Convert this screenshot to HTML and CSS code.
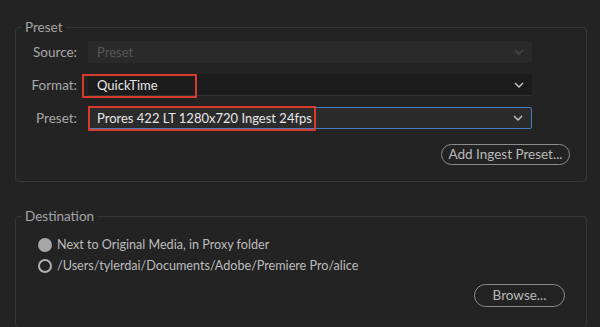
FILE: index.html
```html
<!DOCTYPE html>
<html lang="en">
<head>
    <meta charset="UTF-8">
    <title>Ingest Settings</title>
    <link rel="stylesheet" href="styles.css">
</head>
<body>
    <!-- Preset -->
    <fieldset class="group">
        <legend>Preset</legend>
        <div class="form">
            <label class="field-label">Source:</label>
            <div class="select is-disabled">
                <span class="select-value">Preset</span>
                <svg class="chevron" width="10" height="6" viewBox="0 0 10 6"><path d="M1 1l4 4 4-4" fill="none" stroke="currentColor" stroke-width="1.4"/></svg>
            </div>

            <label class="field-label">Format:</label>
            <div class="select is-dark">
                <span class="select-value">QuickTime</span>
                <svg class="chevron" width="10" height="6" viewBox="0 0 10 6"><path d="M1 1l4 4 4-4" fill="none" stroke="currentColor" stroke-width="1.4"/></svg>
                <div class="highlight highlight-format"></div>
            </div>

            <label class="field-label">Preset:</label>
            <div class="select is-focused">
                <span class="select-value">Prores 422 LT 1280x720 Ingest 24fps</span>
                <svg class="chevron" width="10" height="6" viewBox="0 0 10 6"><path d="M1 1l4 4 4-4" fill="none" stroke="currentColor" stroke-width="1.4"/></svg>
                <div class="highlight highlight-preset"></div>
            </div>
        </div>
        <div class="actions">
            <button class="pill-btn">Add Ingest Preset...</button>
        </div>
    </fieldset>

    <!-- Destination -->
    <fieldset class="group group-dest">
        <legend>Destination</legend>
        <div class="radio-list">
            <div class="radio-row">
                <span class="radio is-checked"></span>
                <span>Next to Original Media, in Proxy folder</span>
            </div>
            <div class="radio-row">
                <span class="radio"></span>
                <span>/Users/tylerdai/Documents/Adobe/Premiere Pro/alice</span>
            </div>
        </div>
        <div class="actions actions-dest">
            <button class="pill-btn browse-btn">Browse...</button>
        </div>
    </fieldset>
</body>
</html>
```

FILE: styles.css
```css
* {
    margin: 0;
    padding: 0;
    box-sizing: border-box;
}

body {
    font-family: 'Lato', 'Open Sans', sans-serif;
    font-size: 13px;
    background-color: #232323;
    color: #b4b4b4;
    width: 600px;
    height: 327px;
    padding: 19px 13px 0 15px;
    overflow: hidden;
    display: flex;
    flex-direction: column;
    gap: 26px;
}

/* 그룹 박스 */
.group {
    border: 1px solid #363636;
    border-radius: 4px;
    padding: 0;
}

.group legend {
    margin-left: 6px;
    padding: 0 3px;
    line-height: 16px;
    color: #a3a3a3;
    font-size: 13.5px;
}

/* 폼 영역 */
.form {
    display: grid;
    grid-template-columns: 61px 444px;
    column-gap: 11px;
    row-gap: 11px;
    padding-top: 6px;
    align-items: center;
}

.field-label {
    text-align: right;
    color: #a9a9a9;
    font-size: 13.5px;
}

.select {
    position: relative;
    height: 22px;
    display: flex;
    align-items: center;
    justify-content: space-between;
    padding: 0 8px 0 9px;
    background-color: #2b2b2b;
    color: #e6e6e6;
    border-radius: 2px;
}

.select .chevron {
    color: #c9c9c9;
}

.select.is-disabled {
    background-color: #2a2a2a;
    color: #575757;
}

.select.is-disabled .chevron {
    color: #4a4a4a;
}

.select.is-dark {
    background-color: #1c1c1c;
    border-bottom: 1px solid #333;
}

.select.is-focused {
    border: 1px solid #4b7cc2;
    padding-left: 8px;
}

/* 빨간 강조 박스 */
.highlight {
    position: absolute;
    border: 2px solid #d63c2c;
    pointer-events: none;
}

.highlight-format {
    left: -6px;
    top: 0;
    width: 115px;
    height: 24px;
}

.highlight-preset {
    left: -1px;
    top: -2px;
    width: 228px;
    height: 25px;
}

/* 버튼 */
.actions {
    display: flex;
    justify-content: flex-end;
    padding: 15px 16px 16px 0;
}

.pill-btn {
    font-family: inherit;
    font-size: 13.5px;
    color: #b9b9b9;
    background: transparent;
    border: 1.5px solid #8c8c8c;
    border-radius: 11px;
    height: 21px;
    width: 129px;
    line-height: 1;
}

.browse-btn {
    width: 91px;
    height: 23px;
    border-radius: 12px;
}

/* 목적지 */
.group-dest {
    flex: 1;
    border-bottom: none;
}

.radio-list {
    display: flex;
    flex-direction: column;
    padding: 10px 0 0 22px;
}

.radio-row {
    display: flex;
    align-items: center;
    gap: 5px;
    height: 21px;
    color: #bdbdbd;
    font-size: 12.6px;
}

.radio {
    width: 14px;
    height: 14px;
    border-radius: 50%;
    border: 2px solid #b0b0b0;
}

.radio.is-checked {
    background-color: #a6a6a6;
    border-color: #a6a6a6;
}

.actions-dest {
    padding: 8px 21px 0 0;
}
```
